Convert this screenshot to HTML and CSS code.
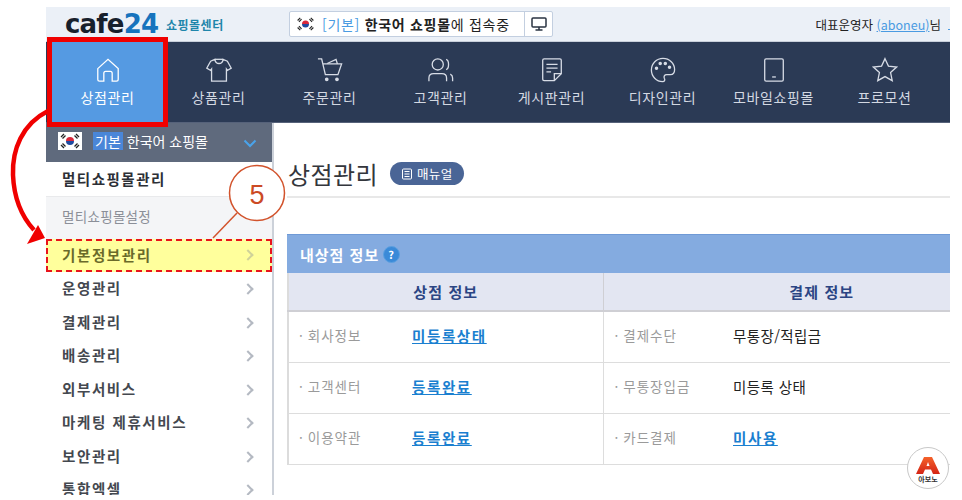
FILE: index.html
```html
<!DOCTYPE html>
<html lang="ko">
<head>
    <meta charset="UTF-8">
    <title>상점관리</title>
    <link rel="stylesheet" href="styles.css">
</head>
<body>

    <svg width="0" height="0" class="defs">
        <symbol id="flag" viewBox="0 0 24 18">
            <rect width="24" height="18" fill="#fff"/>
            <path d="M8 9a4 4 0 0 1 8 0z" fill="#d8283c"/>
            <path d="M8 9a4 4 0 0 0 8 0z" fill="#1f4aa0"/>
            <path d="M3 5l3-3M4.500 6.500l3-3M21 5l-3-3M19.500 6.500l-3-3M3 13l3 3M4.500 11.500l3 3M21 13l-3 3M19.500 11.500l-3 3" stroke="#222" stroke-width="1.300"/>
        </symbol>
        <linearGradient id="abono-red" x1="0" y1="0" x2="0" y2="1">
            <stop offset="0" stop-color="#f4622a"/>
            <stop offset="1" stop-color="#d42415"/>
        </linearGradient>
    </svg>

    <div class="page">

        <!-- Top Bar -->
        <div class="top-bar">
            <div class="logo"><span class="logo-dark">cafe</span><span class="logo-blue">24</span></div>
            <div class="logo-sub">쇼핑몰센터</div>
            <div class="shop-box">
                <svg class="shop-flag"><use href="#flag"/></svg>
                <span class="shop-text"><span class="shop-tag">[기본]</span> <b>한국어 쇼핑몰</b>에 접속중</span>
                <span class="shop-monitor">
                    <svg width="18" height="16" viewBox="0 0 18 16" fill="none" stroke="#2a3342" stroke-width="1.500">
                        <rect x="2" y="2" width="14" height="9" rx="1"/>
                        <path d="M9 11v3M5.500 14h7"/>
                    </svg>
                </span>
            </div>
            <div class="user-info">대표운영자 <a href="#">(aboneu)</a>님</div>
        </div>

        <!-- Main Nav -->
        <div class="main-nav">
            <div class="nav-item active">
                <svg viewBox="0 0 28 28"><path d="M3 12.500 14 2.500l11 10V24a2 2 0 0 1-2 2h-4.500V17.500a2 2 0 0 0-2-2h-5a2 2 0 0 0-2 2V26H5a2 2 0 0 1-2-2z"/></svg>
                <span>상점관리</span>
            </div>
            <div class="nav-item">
                <svg viewBox="0 0 28 28"><path d="M9.500 2.500 5 4.500.8 12l4.200 2.500 1-1.500V26h16V13l1 1.500L27.200 12 23 4.500l-4.500-2c-.5 3-2 4.500-4.500 4.500S10 5.500 9.500 2.500z"/><path d="M9.500 2.500h9"/></svg>
                <span>상품관리</span>
            </div>
            <div class="nav-item">
                <svg viewBox="0 0 28 28"><path d="M1 2h4l4 17h13.500l4-11.500H6.500"/><path d="M11 7 20.500 2.500l1.500 5"/><circle cx="10.500" cy="24" r="1.300" fill="#d7dce6"/><circle cx="21.500" cy="24" r="1.300" fill="#d7dce6"/></svg>
                <span>주문관리</span>
            </div>
            <div class="nav-item">
                <svg viewBox="0 0 28 28"><circle cx="10.500" cy="8" r="6"/><path d="M19.500 2.500c3.500 1 3.500 10 0 11"/><path d="M1 26v-3.500c0-3 2-4.500 5-4.500h9c3 0 5 1.500 5 4.500V26"/><path d="M24 18.500c1.500.7 2.500 2 2.500 4V26"/></svg>
                <span>고객관리</span>
            </div>
            <div class="nav-item">
                <svg viewBox="0 0 28 28"><path d="M16.500 25.500H5.500a1.500 1.500 0 0 1-1.500-1.500V3.500A1.500 1.500 0 0 1 5.500 2h17A1.500 1.500 0 0 1 24 3.500V18z"/><path d="M16.500 25.500V18H24"/><path d="M8 8h12M8 12h12M8 16h5"/></svg>
                <span>게시판관리</span>
            </div>
            <div class="nav-item">
                <svg viewBox="0 0 28 28"><path d="M14 1.500C7 1.500 1.500 7 1.500 14S7 26.500 13.500 26.500c2.500 0 2.800-2 2-3.500-1-2 0-4 2.500-4h4c3 0 4.500-2.500 4.500-5.500C26.500 7 21 1.500 14 1.500z"/><circle cx="7" cy="12" r="1.200" fill="#d7dce6"/><circle cx="11" cy="7" r="1.200" fill="#d7dce6"/><circle cx="16.500" cy="7" r="1.200" fill="#d7dce6"/><circle cx="21" cy="11" r="1.200" fill="#d7dce6"/></svg>
                <span>디자인관리</span>
            </div>
            <div class="nav-item">
                <svg viewBox="0 0 28 28"><rect x="4" y="2" width="20" height="24" rx="1.500"/><path d="M12 21.500h4"/></svg>
                <span>모바일쇼핑몰</span>
            </div>
            <div class="nav-item">
                <svg viewBox="0 0 28 28"><path d="M14 1.800l3.700 8 8.800 1-6.500 6 1.800 8.700L14 21.100l-7.800 4.400L8 16.800l-6.500-6 8.800-1z"/></svg>
                <span>프로모션</span>
            </div>
        </div>

        <div class="content-wrap">

            <!-- Sidebar -->
            <div class="sidebar">
                <div class="side-head">
                    <svg class="side-flag"><use href="#flag"/></svg>
                    <span class="side-tag">기본</span>
                    <span class="side-shop">한국어 쇼핑몰</span>
                    <svg class="side-caret" width="14" height="9" viewBox="0 0 14 9" fill="none" stroke="#4aa3ea" stroke-width="2"><path d="M1.500 1.500 7 7l5.500-5.500"/></svg>
                </div>
                <div class="side-title">멀티쇼핑몰관리</div>
                <div class="side-sub">멀티쇼핑몰설정</div>
                <div class="side-item selected">기본정보관리</div>
                <div class="side-item">운영관리</div>
                <div class="side-item">결제관리</div>
                <div class="side-item">배송관리</div>
                <div class="side-item">외부서비스</div>
                <div class="side-item">마케팅 제휴서비스</div>
                <div class="side-item">보안관리</div>
                <div class="side-item">통합엑셀</div>
            </div>

            <!-- Main -->
            <div class="main">
                <div class="page-title">
                    <h1>상점관리</h1>
                    <span class="manual-btn">
                        <svg width="12" height="12" viewBox="0 0 12 12" fill="none" stroke="#fff"><rect x="1.500" y="1" width="9" height="10" rx="1"/><path d="M3.500 3.500h5M3.500 6h5M3.500 8.500h5"/></svg>
                        매뉴얼
                    </span>
                </div>

                <div class="info-head">내상점 정보 <span class="help">?</span></div>
                <table class="info-table">
                    <colgroup>
                        <col class="col-a"><col class="col-b"><col class="col-c"><col>
                    </colgroup>
                    <tr>
                        <th colspan="2">상점 정보</th>
                        <th colspan="2">결제 정보</th>
                    </tr>
                    <tr>
                        <td class="label">회사정보</td>
                        <td class="value"><a href="#">미등록상태</a></td>
                        <td class="label">결제수단</td>
                        <td class="value">무통장/적립금</td>
                    </tr>
                    <tr>
                        <td class="label">고객센터</td>
                        <td class="value"><a href="#">등록완료</a></td>
                        <td class="label">무통장입금</td>
                        <td class="value">미등록 상태</td>
                    </tr>
                    <tr>
                        <td class="label">이용약관</td>
                        <td class="value"><a href="#">등록완료</a></td>
                        <td class="label">카드결제</td>
                        <td class="value"><a href="#">미사용</a></td>
                    </tr>
                </table>
            </div>
        </div>
    </div>

    <!-- Annotations -->
    <svg class="notes" width="962" height="500" viewBox="0 0 962 500" fill="none">
        <path d="M48 111C22 124 12 150 13 175c1 24 10 43 21 55" stroke="#f00000" stroke-width="4.500"/>
        <path d="M45 238 27 244 38 225z" fill="#f00000"/>
        <circle cx="257" cy="193" r="27.500" fill="#fff" stroke="#d2532c" stroke-width="1.500"/>
        <path d="M237 213 213 238" stroke="#d2532c" stroke-width="1.500"/>
    </svg>
    <div class="step-num">5</div>

    <!-- Badge -->
    <div class="abono">
        <svg width="24" height="19" viewBox="0 0 24 19"><path d="M8 1h8l8 17h-7l-2-4.500H9L7 18H0z" fill="url(#abono-red)"/><path d="M12 6l-1.500 4h3z" fill="#fff"/></svg>
        <span>아보노</span>
    </div>

</body>
</html>
```

FILE: styles.css
```css
body, html {
    margin: 0;
    padding: 0;
    height: 100%;
    overflow: hidden;
    background: #fff;
    font-family: "Noto Sans CJK KR", "Liberation Sans", sans-serif;
}

.defs {
    position: absolute;
}

.page {
    width: 904px;
    height: 488px;
    margin: 7px 0 0 46px;
    overflow: hidden;
}

/* Top Bar */
.top-bar {
    display: flex;
    align-items: center;
    height: 34px;
    padding-left: 19px;
    background: #ebf0f7;
    border-bottom: 1px solid #c8cfda;
    overflow: hidden;
}

.logo {
    width: 101px;
    font-family: "DejaVu Sans", sans-serif;
    font-size: 26px;
    font-weight: bold;
    letter-spacing: -0.8px;
    line-height: 34px;
}

.logo-dark {
    color: #17202c;
}

.logo-blue {
    color: #1673bd;
}

.logo-sub {
    width: 123px;
    font-size: 12px;
    font-weight: bold;
    letter-spacing: 0.500px;
    color: #1f86ab;
}

.shop-box {
    display: flex;
    align-items: center;
    width: 262px;
    height: 24px;
    background: #fff;
    border: 1px solid #c3cfe0;
    border-radius: 2px;
    font-size: 14px;
    letter-spacing: 0.700px;
    color: #222;
}

.shop-flag {
    width: 21px;
    height: 16px;
    margin: 0 6px 0 5px;
}

.shop-text {
    flex: 1;
    white-space: nowrap;
}

.shop-tag {
    color: #4a9be2;
}

.shop-monitor {
    display: flex;
    align-items: center;
    justify-content: center;
    width: 27px;
    height: 24px;
    border-left: 1px solid #c3cfe0;
}

.user-info {
    margin-left: auto;
    font-size: 12.500px;
    color: #222;
}

.user-info a {
    color: #4a9be2;
}

.user-info::after {
    content: "";
    display: inline-block;
    width: 2px;
    height: 1px;
    margin-left: 7px;
    background: #4a9be2;
}

/* Main Nav */
.main-nav {
    display: flex;
    height: 80px;
    padding-left: 6px;
    background: #2b3a55;
    border-bottom: 1px solid #56627a;
}

.nav-item {
    display: flex;
    flex-direction: column;
    align-items: center;
    box-sizing: border-box;
    width: 111px;
    padding-top: 15px;
    font-size: 14px;
    letter-spacing: 0.600px;
    line-height: 20px;
    color: #d3d8e2;
}

.nav-item svg {
    width: 26px;
    height: 26px;
    margin-bottom: 4px;
    fill: none;
    stroke: #d7dce6;
    stroke-width: 1.400;
}

.nav-item.active {
    position: relative;
    z-index: 2;
    background: #559ae2;
    color: #fff;
    outline: 5px solid #f00000;
}

.nav-item.active svg {
    stroke: #fff;
}

.content-wrap {
    display: flex;
}

/* Sidebar */
.sidebar {
    flex: none;
    width: 226px;
    height: 373px;
    border-right: 2px solid #ccd1d9;
    overflow: hidden;
}

.side-head {
    display: flex;
    align-items: center;
    box-sizing: border-box;
    height: 39px;
    padding: 0 0 3px 12px;
    background: #5f6a7d;
    font-size: 14px;
    color: #fff;
}

.side-flag {
    width: 24px;
    height: 18px;
    margin-right: 11px;
}

.side-tag {
    padding: 0 2px;
    margin-right: 4px;
    background: #4a86d8;
    line-height: 18px;
}

.side-caret {
    margin: 5px 15px 0 auto;
}

.side-title {
    height: 34px;
    padding-left: 16px;
    border-bottom: 1px solid #e9eaec;
    font-size: 14.500px;
    font-weight: bold;
    letter-spacing: 1.500px;
    line-height: 33px;
    color: #2c2f36;
}

.side-sub {
    height: 42px;
    padding-left: 16px;
    background: #f4f5f7;
    font-size: 13.500px;
    letter-spacing: 0.300px;
    line-height: 39px;
    color: #8b8f98;
}

.side-item {
    position: relative;
    height: 33.500px;
    padding-left: 16px;
    font-size: 14.500px;
    font-weight: bold;
    letter-spacing: 1.600px;
    line-height: 31px;
    color: #44484f;
}

.side-item::after {
    content: "";
    position: absolute;
    top: 13px;
    right: 20px;
    width: 6px;
    height: 6px;
    border-top: 2px solid #b4b9c2;
    border-right: 2px solid #b4b9c2;
    transform: rotate(45deg);
}

.side-item.selected {
    box-sizing: border-box;
    height: 33px;
    padding-left: 14px;
    background: #ffff9c;
    border: 2px dashed #e8141c;
    line-height: 27px;
    color: #6a6a2a;
}

.side-item.selected::after {
    top: 10px;
    right: 18px;
    border-color: #cfd29a;
}

/* Main */
.main {
    flex: 1;
    min-width: 0;
    padding-left: 13px;
    overflow: hidden;
}

.page-title {
    display: flex;
    align-items: center;
    box-sizing: border-box;
    height: 75px;
    padding-top: 28px;
    border-bottom: 2px solid #e8e8e8;
}

.page-title h1 {
    margin: 0 12px 0 1px;
    font-size: 24px;
    font-weight: normal;
    letter-spacing: 0.400px;
    color: #33363c;
}

.manual-btn {
    display: flex;
    align-items: center;
    gap: 4px;
    height: 23px;
    padding: 0 11px;
    border-radius: 12px;
    background: #4a6596;
    font-size: 12.500px;
    letter-spacing: 0.400px;
    color: #fff;
}

.info-head {
    display: flex;
    align-items: center;
    box-sizing: border-box;
    height: 39px;
    margin-top: 36px;
    padding-left: 13px;
    background: #84abe0;
    border-top: 1px solid #6f9ad6;
    font-size: 15px;
    font-weight: bold;
    letter-spacing: 1px;
    color: #fff;
}

.help {
    display: flex;
    align-items: center;
    justify-content: center;
    width: 15px;
    height: 15px;
    margin-left: 4px;
    border-radius: 50%;
    background: #3a8ad8;
    border: 1px solid #5a9fe0;
    font-size: 11px;
}

/* Info Table */
.info-table {
    width: 754px;
    table-layout: fixed;
    border-collapse: collapse;
    border-left: 2px solid #dcdcdc;
}

.col-a {
    width: 124px;
}

.col-b {
    width: 191px;
}

.col-c {
    width: 130px;
}

.info-table th {
    height: 37px;
    padding: 0;
    background: #e3e6f2;
    border-bottom: 2px solid #cfcfd4;
    border-right: 1px solid #cfcfd4;
    font-size: 15px;
    letter-spacing: 1.100px;
    color: #2b4584;
}

.info-table td {
    box-sizing: border-box;
    height: 51px;
    padding: 0 0 3px;
    border-bottom: 1px solid #dddddd;
    font-size: 14.500px;
    letter-spacing: 0.400px;
}

.info-table .label {
    padding-left: 10px;
    font-size: 13.500px;
    color: #9a9a9a;
    letter-spacing: 1px;
}

.info-table td:nth-child(3) {
    padding-left: 11px;
}

.info-table .label::before {
    content: "·";
    margin-right: 4px;
}

.info-table .value {
    border-right: 1px solid #dddddd;
    color: #222;
}

.info-table .value a {
    font-weight: bold;
    letter-spacing: 1.600px;
    color: #1a7fd0;
}

/* Annotations */
.notes {
    position: absolute;
    top: 0;
    left: 0;
    z-index: 3;
    pointer-events: none;
}

.step-num {
    position: absolute;
    top: 178px;
    left: 229px;
    z-index: 4;
    width: 56px;
    font-family: "Liberation Sans", sans-serif;
    font-size: 27px;
    line-height: 34px;
    text-align: center;
    color: #cc4a25;
}

.abono {
    position: absolute;
    top: 447px;
    left: 907px;
    z-index: 4;
    display: flex;
    flex-direction: column;
    align-items: center;
    box-sizing: border-box;
    width: 42px;
    height: 42px;
    padding-top: 8px;
    background: #fff;
    border: 1px solid #c8c8c8;
    border-radius: 50%;
    font-size: 7px;
    font-weight: bold;
    line-height: 9px;
    color: #333;
}

.abono svg {
    flex: none;
}
```
